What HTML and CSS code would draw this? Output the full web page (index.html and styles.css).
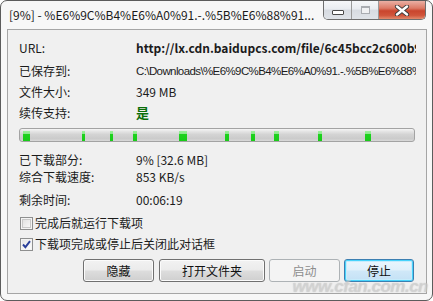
FILE: index.html
```
<!DOCTYPE html>
<html>
<head>
<meta charset="utf-8">
<link rel="stylesheet" href="styles.css">
</head>
<body>
<div class="window">
  <div class="titlebar">
    <div class="title">[9%] - %E6%9C%B4%E6%A0%91.-.%5B%E6%88%91...</div>
    <div class="caption">
      <div class="cap-btn cap-min"><span class="min-glyph"></span></div>
      <div class="cap-btn cap-max"><span class="max-glyph"></span></div>
      <div class="cap-btn cap-close">
        <svg width="16" height="11" viewBox="0 0 16 11">
          <path d="M3 1.5 L13 9.5 M13 1.5 L3 9.5" stroke="#3a3a3a" stroke-width="4.2" stroke-linecap="round" fill="none"/>
          <path d="M3 1.5 L13 9.5 M13 1.5 L3 9.5" stroke="#ffffff" stroke-width="2.4" stroke-linecap="round" fill="none"/>
        </svg>
      </div>
    </div>
  </div>
  <div class="client">
    <div class="row r1"><span class="label">URL:</span><span class="value url">http://lx.cdn.baidupcs.com/file/6c45bcc2c600b9f0e1a7d3</span></div>
    <div class="row r2"><span class="label">已保存到:</span><span class="value path">C:\Downloads\%E6%9C%B4%E6%A0%91.-.%5B%E6%88%91%E7%9A%84</span></div>
    <div class="row r3"><span class="label">文件大小:</span><span class="value">349 MB</span></div>
    <div class="row r4"><span class="label">续传支持:</span><span class="value yes">是</span></div>
    <div class="progress">
      <span class="seg" style="left:3px;width:7px"></span>
      <span class="seg" style="left:62px;width:3px"></span>
      <span class="seg" style="left:90px;width:3px"></span>
      <span class="seg" style="left:113px;width:4px"></span>
      <span class="seg" style="left:159px;width:8px"></span>
      <span class="seg" style="left:205px;width:4px"></span>
      <span class="seg" style="left:231px;width:4px"></span>
      <span class="seg" style="left:254px;width:5px"></span>
      <span class="seg" style="left:298px;width:4px"></span>
      <span class="seg" style="left:345px;width:6px"></span>
    </div>
    <div class="row r5"><span class="label">已下载部分:</span><span class="value">9% [32.6 MB]</span></div>
    <div class="row r6"><span class="label">综合下载速度:</span><span class="value">853 KB/s</span></div>
    <div class="row r7"><span class="label">剩余时间:</span><span class="value">00:06:19</span></div>
    <div class="check c1"><span class="box"></span><span class="check-text">完成后就运行下载项</span></div>
    <div class="check c2"><span class="box checked">
      <svg width="9" height="9" viewBox="0 0 9 9"><path d="M1 4.5 L3.4 7.2 L8 1.2" stroke="#2a3f9a" stroke-width="1.9" fill="none"/></svg>
    </span><span class="check-text">下载项完成或停止后关闭此对话框</span></div>
    <div class="buttons">
      <div class="btn b-hide">隐藏</div>
      <div class="btn b-open">打开文件夹</div>
      <div class="btn b-start disabled">启动</div>
      <div class="btn b-stop default">停止</div>
    </div>
  </div>
  <div class="watermark">www.cfan.com.cn</div>
</div>
</body>
</html>
```
FILE: styles.css
```
* { box-sizing: border-box; }
html, body { margin: 0; padding: 0; background: #ffffff; }
body {
  font-family: "Noto Sans CJK SC", "Liberation Sans", sans-serif;
  font-size: 12px;
  color: #1b1b1b;
}
.window {
  position: relative;
  width: 433px;
  height: 301px;
  border: 1px solid #5c5c5c;
  border-radius: 7px;
  background: #f7f7f7;
  padding: 0 5px 6px 6px;
  display: flex;
  flex-direction: column;
  overflow: hidden;
}
.titlebar {
  height: 28px;
  display: flex;
  align-items: flex-start;
}
.title {
  padding: 5px 0 0 2px;
  line-height: 17px;
  font-size: 12px;
  color: #1a1a1a;
  white-space: nowrap;
}
.caption {
  margin-left: auto;
  margin-right: 1px;
  display: flex;
  height: 19px;
  border: 1px solid #6e6e6e;
  border-top: none;
  border-radius: 0 0 5px 5px;
  overflow: hidden;
}
.cap-btn {
  height: 18px;
  display: flex;
  align-items: center;
  justify-content: center;
}
.cap-min, .cap-max {
  width: 28px;
  background: linear-gradient(#f6f7f9 0%, #e9ecf0 45%, #d7dbe1 50%, #dfe3e8 100%);
  border-right: 1px solid #9a9a9a;
}
.cap-max { width: 27px; }
.min-glyph {
  width: 12px;
  height: 5px;
  margin-top: 4px;
  background: #ffffff;
  border: 1px solid #4a4a4a;
  border-radius: 1px;
}
.max-glyph {
  width: 9px;
  height: 8px;
  border: 1px solid #a9acb1;
  border-top-width: 2px;
  background: #f0f1f3;
}
.cap-close {
  width: 46px;
  background: linear-gradient(#eab0a4 0%, #dc7a66 40%, #c9452d 55%, #d0553b 80%, #e28a6c 100%);
}
.client {
  flex: 1;
  background: #f0f0f0;
  border: 1px solid #a5a5a5;
  padding: 0 11px 0 11px;
  display: flex;
  flex-direction: column;
}
.row {
  height: 16px;
  line-height: 16px;
  display: flex;
  white-space: nowrap;
}
.r1 { margin-top: 10px; }
.r2 { margin-top: 7px; }
.r3 { margin-top: 5px; }
.r4 { margin-top: 5px; }
.r5 { margin-top: 10px; }
.r6 { margin-top: 1px; }
.r7 { margin-top: 7px; }
.label {
  width: 117px;
  flex: none;
}
.value {
  flex: 1;
  overflow: hidden;
  margin-right: -1px;
}
.url { font-weight: bold; }
.path {
  font-family: "Liberation Sans", sans-serif;
  font-size: 11.5px;
  letter-spacing: -0.6px;
}
.yes {
  color: #0a6e0a;
  font-weight: bold;
  font-size: 13px;
  overflow: visible;
}
.progress {
  position: relative;
  margin-top: 7px;
  height: 14px;
  border: 1px solid #a3a3a3;
  border-radius: 3px;
  background: linear-gradient(#f6f6f6 0%, #e6e6e6 18%, #d4d4d4 45%, #cbcbcb 80%, #d9d9d9 100%);
}
.seg {
  position: absolute;
  top: 2px;
  height: 10px;
  background: linear-gradient(#9cf09c 0%, #8be88b 30%, #1fd21f 31%, #18cc18 100%);
}
.check {
  display: flex;
  align-items: center;
  height: 16px;
  line-height: 16px;
  padding-left: 1px;
}
.c1 { margin-top: 7px; }
.c2 { margin-top: 5px; }
.box {
  width: 13px;
  height: 13px;
  border: 1px solid #8e8f8f;
  background: linear-gradient(135deg, #dcdcdc 0%, #f0f0f0 60%, #ffffff 100%);
  box-shadow: inset 0 0 0 1px #f4f4f4, inset 0 0 0 2px #c9c9c9;
  display: flex;
  align-items: center;
  justify-content: center;
  flex: none;
}
.box.checked {
  background: linear-gradient(135deg, #e2e2e2 0%, #f4f4f4 60%, #ffffff 100%);
  box-shadow: inset 0 0 0 1px #f4f4f4;
}
.check-text { margin-left: 2px; }
.buttons {
  margin-top: 7px;
  display: flex;
  justify-content: flex-end;
  gap: 4px;
  padding-right: 1px;
}
.btn {
  height: 23px;
  width: 71px;
  border: 1px solid #707070;
  border-radius: 3px;
  background: linear-gradient(#f2f2f2 0%, #ebebeb 48%, #dddddd 52%, #cfcfcf 100%);
  box-shadow: inset 0 0 0 1px #fbfbfb;
  display: flex;
  align-items: center;
  justify-content: center;
  font-size: 12px;
  color: #111;
}
.b-hide { margin-right: 1px; }
.b-open { width: 106px; }
.b-stop { width: 70px; }
.btn.disabled {
  border-color: #adb2b5;
  background: #f4f4f4;
  box-shadow: none;
  color: #8d8d8d;
}
.btn.default {
  border-color: #3c7fb1;
  background: linear-gradient(#eaf6fd 0%, #e0f0fa 48%, #d0e8f8 52%, #c4e1f5 100%);
  box-shadow: inset 0 0 0 1px #48d3fb, inset 0 0 0 2px #c6ecfc;
}
.watermark {
  position: absolute;
  right: 4px;
  bottom: 3px;
  font-family: "Liberation Sans", sans-serif;
  font-size: 17px;
  font-weight: bold;
  font-style: italic;
  letter-spacing: -0.5px;
  color: rgba(225, 225, 225, 0.5);
  text-shadow: 0 0 1px rgba(150, 150, 150, 0.55);
  pointer-events: none;
}
```
